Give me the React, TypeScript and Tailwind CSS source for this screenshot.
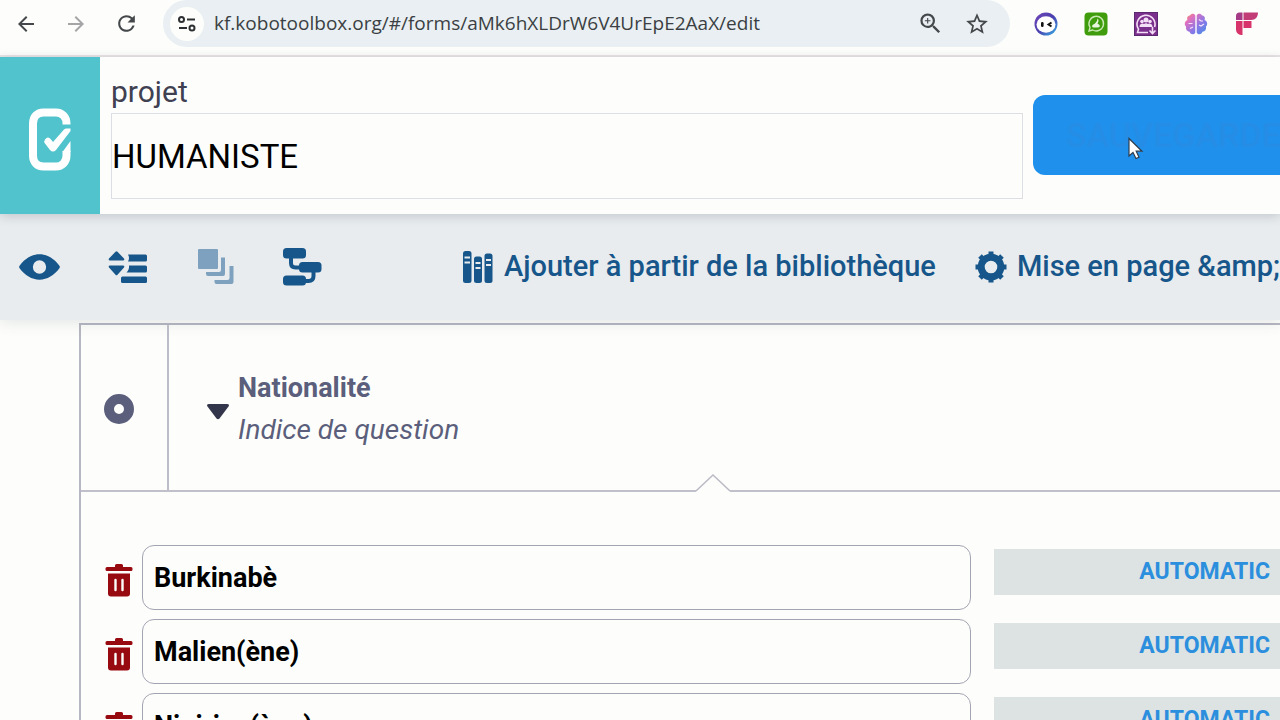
import type { ReactNode } from "react";
import { MdArrowBack, MdArrowForward, MdRefresh, MdStarBorder, MdZoomIn } from "react-icons/md";

const choices = ["Burkinabè", "Malien(ène)", "Nigirien(ène)"];

const SiteInfoIcon = () => (
  <svg viewBox="0 0 20 20" className="size-5" fill="none" stroke="#2d3033" strokeWidth="2">
    <circle cx="4.5" cy="5.5" r="2.5" />
    <path d="M10 5.5h8M2 14h8" />
    <circle cx="15" cy="14" r="2.5" />
  </svg>
);

const FaceIcon = () => (
  <svg viewBox="0 0 24 24" className="size-6">
    <defs>
      <linearGradient id="face" x1="0" y1="0" x2="1" y2="1">
        <stop offset="0" stopColor="#7446b8" />
        <stop offset="0.5" stopColor="#4b3fae" />
        <stop offset="1" stopColor="#35b6ea" />
      </linearGradient>
    </defs>
    <circle cx="12" cy="12" r="11.5" fill="url(#face)" />
    <ellipse cx="12" cy="12.5" rx="9.5" ry="8.2" fill="#fff" />
    <rect x="7" y="10" width="2.6" height="5" rx="1.2" fill="#111" />
    <path d="M17.5 10.5 14.5 12.5l3 2" fill="none" stroke="#111" strokeWidth="2" />
  </svg>
);

const GreenChatIcon = () => (
  <svg viewBox="0 0 24 24" className="size-6">
    <rect x="0.5" y="0.5" width="23" height="23" rx="4" fill="#3f9c0c" />
    <path
      d="M5 19l1-3.6A7.3 7.3 0 1 1 8.7 18z"
      fill="none"
      stroke="#c9e8b4"
      strokeWidth="1.4"
    />
    <path
      d="M13.5 6.5q2 2 0 5l2 1.500q1 2.500-2 2.500H9.500q-2-.5-1-2.500l2.500-1.500q2.500-2 2.500-5z"
      fill="#e8f6dd"
    />
  </svg>
);

const PurpleGroupIcon = () => (
  <svg viewBox="0 0 24 24" className="size-6">
    <rect x="0.5" y="0.5" width="23" height="23" fill="#7b2f8c" stroke="#5c2870" />
    <path
      d="M14 20.5H3.5l1-3.3A9 9 0 1 1 20.6 15"
      fill="none"
      stroke="#f3dff6"
      strokeWidth="1.6"
    />
    <g fill="#f3dff6">
      <circle cx="12" cy="8" r="2.5" />
      <circle cx="8" cy="9.5" r="1.8" />
      <circle cx="16" cy="9.5" r="1.8" />
      <path d="M5.5 15c0-4 4-3.8 4.5-3 1-1 3-1 4 0 .5-.8 4.5-1 4.5 3z" />
    </g>
    <path d="M18.5 15v6m-3-2.5 3 3 3-3" fill="none" stroke="#f3dff6" strokeWidth="1.6" />
  </svg>
);

const BrainIcon = () => (
  <svg viewBox="0 0 24 24" className="size-6">
    <defs>
      <linearGradient id="brain" x1="0" y1="0" x2="1" y2="1">
        <stop offset="0" stopColor="#f5a04c" />
        <stop offset="0.25" stopColor="#e070c0" />
        <stop offset="0.6" stopColor="#8a78e6" />
        <stop offset="1" stopColor="#3f8fe8" />
      </linearGradient>
    </defs>
    <path
      fill="url(#brain)"
      d="M11.3 3.5C10.5 1 7 1 6 3.5 3.5 3.5 2.5 6 3.5 8 .5 9 0 13 2 14.5 1.5 17.5 3 19.500 5.500 19.800 6.500 23 10.500 23 11.300 20.500zM12.700 3.500C13.500 1 17 1 18 3.500c2.500 0 3.500 2.500 2.500 4.500 3 1 3.500 5 1.500 6.500.5 3-1 5-3.500 5.300-1 3.200-5 3.200-5.800.7z"
    />
    <path
      d="M4.500 11.500h4M6 16.500l3-1.500M15 7.500l2 1.500h2M20 12l-3 2-2-1"
      fill="none"
      stroke="#f6e3fb"
      strokeWidth="1.2"
    />
  </svg>
);

const BlocksIcon = () => (
  <svg viewBox="0 0 24 24" className="size-6">
    <path d="M2 4a3.5 3.5 0 0 1 3.5-3.5H8.500V8H2z" fill="#a53a86" />
    <path d="M9.500.5H24C24 5 21.500 8 17 8H9.500z" fill="#c23c78" />
    <path d="M2 9h6.500v14C4.500 23 2 21 2 17z" fill="#d8346c" />
    <path d="M9.500 9H17.500v7H9.500z" fill="#d8346c" />
  </svg>
);

const KoboLogo = () => (
  <svg viewBox="0 0 44 64" className="h-16 w-11" fill="none" stroke="#fff">
    <path
      d="M38.500 16.500v-1C38.500 9 34 4.500 28 4.500H15.500C9 4.500 5 9 5 15.500v32C5 54 9 58.500 15.500 58.500H28c6 0 10.500-4.500 10.500-11V43"
      strokeWidth="8"
    />
    <path d="M34.500 44 42.500 33v11z" fill="#fff" stroke="none" />
    <path
      d="M17 31.500q3-4 6 0l2 2.500L36 21.500q1-1 2.500-1h4V23L28 42q-3 3-6 0l-5-6.500q-1.500-2 0-4z"
      fill="#fff"
      stroke="none"
    />
  </svg>
);

const EyeIcon = () => (
  <svg viewBox="0 0 42 28" className="h-7 w-[41px]">
    <path
      fill="currentColor"
      fillRule="evenodd"
      d="M.8 12.4C6 5.5 13 1 21 1s15 4.5 20.2 11.4a2.5 2.5 0 0 1 0 3.2C36 22.5 29 27 21 27S6 22.5.8 15.6a2.5 2.5 0 0 1 0-3.2zM21 7.2a6.8 6.8 0 1 0 0 13.6 6.8 6.8 0 0 0 0-13.6z"
    />
  </svg>
);

const ReorderIcon = () => (
  <svg viewBox="0 0 40 34" className="h-[34px] w-10" fill="currentColor">
    <path d="M9.5 1.8 16 8.5q1 2-1 2H2q-2 0-1-2L7.5 1.8q1-1 2 0zM2 15.5h13q2 0 1 2l-6.5 7.3q-1 1-2 0L1 17.5q-1-2 1-2z" />
    <path d="M20 4.5h17.5q1.5 0 1.5 1.5v4q0 1.5-1.5 1.5H20q2-3.5 0-7zM21 15.5h16.5q1.5 0 1.5 1.5v4q0 1.5-1.5 1.5H18.5q3-3 2.5-7z" />
    <rect x="13" y="26.5" width="26" height="6.5" rx="1.5" />
  </svg>
);

const StackIcon = () => (
  <svg viewBox="0 0 36 36" className="size-9" fill="currentColor">
    <rect width="20" height="20" rx="1" />
    <path d="M23 8.500h4V25q0 2-2 2H10q-2 0-2-2v-2h13q2 0 2-2zM31.500 17h4v16q0 2-2 2h-15q-2 0-2-2v-2h13q2 0 2-2z" />
  </svg>
);

const CascadeIcon = () => (
  <svg viewBox="0 0 40 38" className="h-[38px] w-10" fill="currentColor">
    <rect x="1" y="0" width="23" height="10.5" rx="3.5" />
    <rect x="17" y="14" width="22.5" height="10.5" rx="3.5" />
    <rect x="1" y="27.5" width="23" height="10" rx="3.5" />
    <path
      d="M9 9v6q0 4.5 4.5 4.5H18M31.5 23v5q0 5-5 5H22"
      fill="none"
      stroke="currentColor"
      strokeWidth="4"
    />
  </svg>
);

const LibraryIcon = () => (
  <svg viewBox="0 0 30 32" className="h-8 w-[30px]">
    <g fill="currentColor">
      <rect x="0" y="0" width="8.5" height="32" rx="2.5" />
      <rect x="11" y="5.5" width="8" height="26.5" rx="2.5" />
      <rect x="21.5" y="2.5" width="8" height="29.5" rx="2.5" />
    </g>
    <path
      d="M1.5 6.5h5.5M1.5 11.5h5.5M12.5 12h5M12.5 17h5M23 9h5M23 14h5"
      stroke="#e8ecee"
      strokeWidth="1.8"
    />
  </svg>
);

const GearIcon = () => (
  <svg viewBox="0 0 32 32" className="size-8" fill="none" stroke="currentColor">
    <circle cx="16" cy="16" r="9.8" strokeWidth="7" />
    <path
      d="M16 .5v5M16 26.5v5M.5 16h5M26.5 16h5M5 5l3.5 3.5M23.5 23.5 27 27M27 5l-3.5 3.5M8.5 23.5 5 27"
      strokeWidth="5"
    />
  </svg>
);

const TrashIcon = () => (
  <svg viewBox="0 0 28 34" className="h-[34px] w-7">
    <path
      fill="currentColor"
      d="M10 1.5q0-1.5 1.5-1.5h5q1.5 0 1.5 1.5V3h8q1.5 0 1.5 1.5v1Q27.5 7 26 7H2Q.5 7 .5 5.5v-1Q.5 3 2 3h8zM3 9.5h22v20q0 3-3 3H6q-3 0-3-3z"
    />
    <path d="M10.5 16v10M17.5 16v10" stroke="#fdfefb" strokeWidth="2.4" strokeLinecap="round" />
  </svg>
);

const CursorIcon = () => (
  <svg viewBox="0 0 16 24" className="h-6 w-4">
    <path
      d="M1 1.5v17.5l4-3.5 3 6 3-1.3-2.8-6H14z"
      fill="#fff"
      stroke="#2f3d4d"
      strokeWidth="1.2"
    />
  </svg>
);

const IconButton = ({
  label,
  className = "",
  disabled,
  children,
}: {
  label: string;
  className?: string;
  disabled?: boolean;
  children: ReactNode;
}) => (
  <button
    type="button"
    aria-label={label}
    disabled={disabled}
    className={`flex shrink-0 items-center justify-center ${className}`}
  >
    {children}
  </button>
);

const BrowserBar = () => (
  <header className="flex h-[57px] items-start border-b-2 border-[#e9e5e6] text-[#45484b]">
    <nav className="flex h-[47px] w-[163px] shrink-0 items-center gap-[26px] pl-[14px]">
      <IconButton label="Retour">
        <MdArrowBack size={24} />
      </IconButton>
      <IconButton label="Avancer" className="text-[#a3a5a6]" disabled>
        <MdArrowForward size={24} />
      </IconButton>
      <IconButton label="Actualiser">
        <MdRefresh size={25} />
      </IconButton>
    </nav>
    <div className="flex h-[47px] min-w-0 flex-1 items-center rounded-full bg-[#e9eff2] pl-[7px] pr-5">
      <IconButton label="Informations sur le site" className="size-[34px] rounded-full bg-[#fdfefb]">
        <SiteInfoIcon />
      </IconButton>
      <input
        aria-label="Adresse"
        defaultValue="kf.kobotoolbox.org/#/forms/aMk6hXLDrW6V4UrEpE2AaX/edit"
        className="ml-[10px] min-w-0 flex-1 bg-transparent font-['Open_Sans',sans-serif] text-[19px] text-[#3b3f43] outline-none"
      />
      <IconButton label="Zoom" className="mr-5">
        <MdZoomIn size={27} />
      </IconButton>
      <IconButton label="Favori">
        <MdStarBorder size={26} />
      </IconButton>
    </div>
    <div className="flex h-[47px] w-[270px] shrink-0 items-center gap-[26px] pl-6">
      <IconButton label="Assistant">
        <FaceIcon />
      </IconButton>
      <IconButton label="Messages">
        <GreenChatIcon />
      </IconButton>
      <IconButton label="Groupes">
        <PurpleGroupIcon />
      </IconButton>
      <IconButton label="Cerveau">
        <BrainIcon />
      </IconButton>
      <IconButton label="Blocs">
        <BlocksIcon />
      </IconButton>
    </div>
  </header>
);

const ProjectHeader = () => (
  <div className="relative z-10 flex h-[157px] bg-[#fdfefb] shadow-[0_2px_10px_rgba(60,70,90,0.22)]">
    <a
      href="#/forms"
      aria-label="KoboToolbox"
      className="flex w-[100px] shrink-0 items-center justify-center bg-[#51c3cc] pt-2"
    >
      <KoboLogo />
    </a>
    <div className="flex min-w-0 flex-1 flex-col pl-[11px] pt-4">
      <label htmlFor="project-name" className="h-10 text-[30px] leading-[38px] text-[#3f4152]">
        projet
      </label>
      <input
        id="project-name"
        defaultValue="HUMANISTE"
        className="h-[86px] w-full border border-[#dcdee6] bg-transparent text-[33px] text-black outline-none"
      />
    </div>
    <div className="relative ml-[10px] mt-[38px] w-[247px] shrink-0">
      <button
        type="button"
        className="h-20 w-full overflow-hidden whitespace-nowrap rounded-l-xl bg-[#1f90ec] pl-[33px] text-left text-[34px] font-medium text-[#258de5]"
      >
        SAUVEGARDER
      </button>
      <span className="pointer-events-none absolute left-[95px] top-[42px]">
        <CursorIcon />
      </span>
    </div>
  </div>
);

const Toolbar = () => (
  <div className="relative flex h-[106px] items-center overflow-hidden whitespace-nowrap bg-[#e8ecee] text-[29px] font-medium text-[#17568a] shadow-[0_2px_14px_rgba(60,70,90,0.14)]">
    <div className="flex w-[463px] shrink-0 items-center pl-[19px]">
      <IconButton label="Aperçu" className="mr-12">
        <EyeIcon />
      </IconButton>
      <IconButton label="Réorganiser" className="mr-[50px]">
        <ReorderIcon />
      </IconButton>
      <IconButton label="Grouper" className="mr-12 text-[#7ea1c0]" disabled>
        <StackIcon />
      </IconButton>
      <IconButton label="Cascade">
        <CascadeIcon />
      </IconButton>
    </div>
    <button type="button" className="mr-[39px] flex items-center gap-[11px]">
      <LibraryIcon />
      Ajouter à partir de la bibliothèque
    </button>
    <button type="button" className="flex items-center gap-[10px]">
      <GearIcon />
      Mise en page &amp;amp;
    </button>
  </div>
);

const ChoiceRow = ({ name }: { name: string }) => (
  <li className="flex items-start">
    <IconButton label={`Supprimer ${name}`} className="mr-[9px] mt-[19px] text-[#970a10]">
      <TrashIcon />
    </IconButton>
    <input
      aria-label="Choix"
      defaultValue={name}
      className="h-[65px] min-w-0 flex-1 rounded-xl border border-[#a3a4b2] bg-transparent px-[11px] text-[27px] font-bold text-black outline-none"
    />
    <button
      type="button"
      className="ml-[23px] mt-1 h-[46px] w-[286px] shrink-0 bg-[#dde2e3] pr-[10px] text-right text-[23px] font-bold text-[#2b8fde]"
    >
      AUTOMATIC
    </button>
  </li>
);

const QuestionCard = () => (
  <section className="ml-[79px] mt-[3px] border-l-2 border-t-2 border-[#b6b7c2]">
    <div className="relative flex h-[167px] border-b-2 border-[#bfc0c9]">
      <div className="flex w-[88px] shrink-0 items-center justify-center border-r-2 border-[#bcbdc8] pr-[10px]">
        <span className="mt-0.5 size-[30px] rounded-full border-10 border-[#5b5f7c]" />
      </div>
      <div className="flex items-center pl-[37px]">
        <button type="button" aria-label="Replier la question" className="mr-2 mt-2">
          <svg viewBox="0 0 24 16" className="h-4 w-6" fill="#33364a">
            <path d="M3 0h18q3 0 1.5 2.5L13.5 14.5q-1.5 1.5-3 0L1.500 2.500Q0 0 3 0z" />
          </svg>
        </button>
        <div className="pt-0.5 leading-[42px] text-[#5b5f7c]">
          <h2 className="text-[27px] font-bold">Nationalité</h2>
          <p className="text-[28px] italic">Indice de question</p>
        </div>
      </div>
      <svg
        viewBox="0 0 34 20"
        className="absolute -bottom-[3px] left-[calc(50%+15px)] h-5 w-[34px]"
        fill="#fdfefb"
        stroke="#b9bac4"
        strokeWidth="1.5"
      >
        <path d="M0 18v2h34v-2" stroke="none" />
        <path d="M0 18 17 2l17 16" />
      </svg>
    </div>
    <ul className="flex flex-col gap-[9px] pl-6 pt-[53px]">
      {choices.map(name => (
        <ChoiceRow key={name} name={name} />
      ))}
    </ul>
  </section>
);

const App = () => (
  <div className="h-screen overflow-hidden bg-[#fdfefb] font-[Roboto,sans-serif]">
    <BrowserBar />
    <ProjectHeader />
    <Toolbar />
    <QuestionCard />
  </div>
);

export default App;
